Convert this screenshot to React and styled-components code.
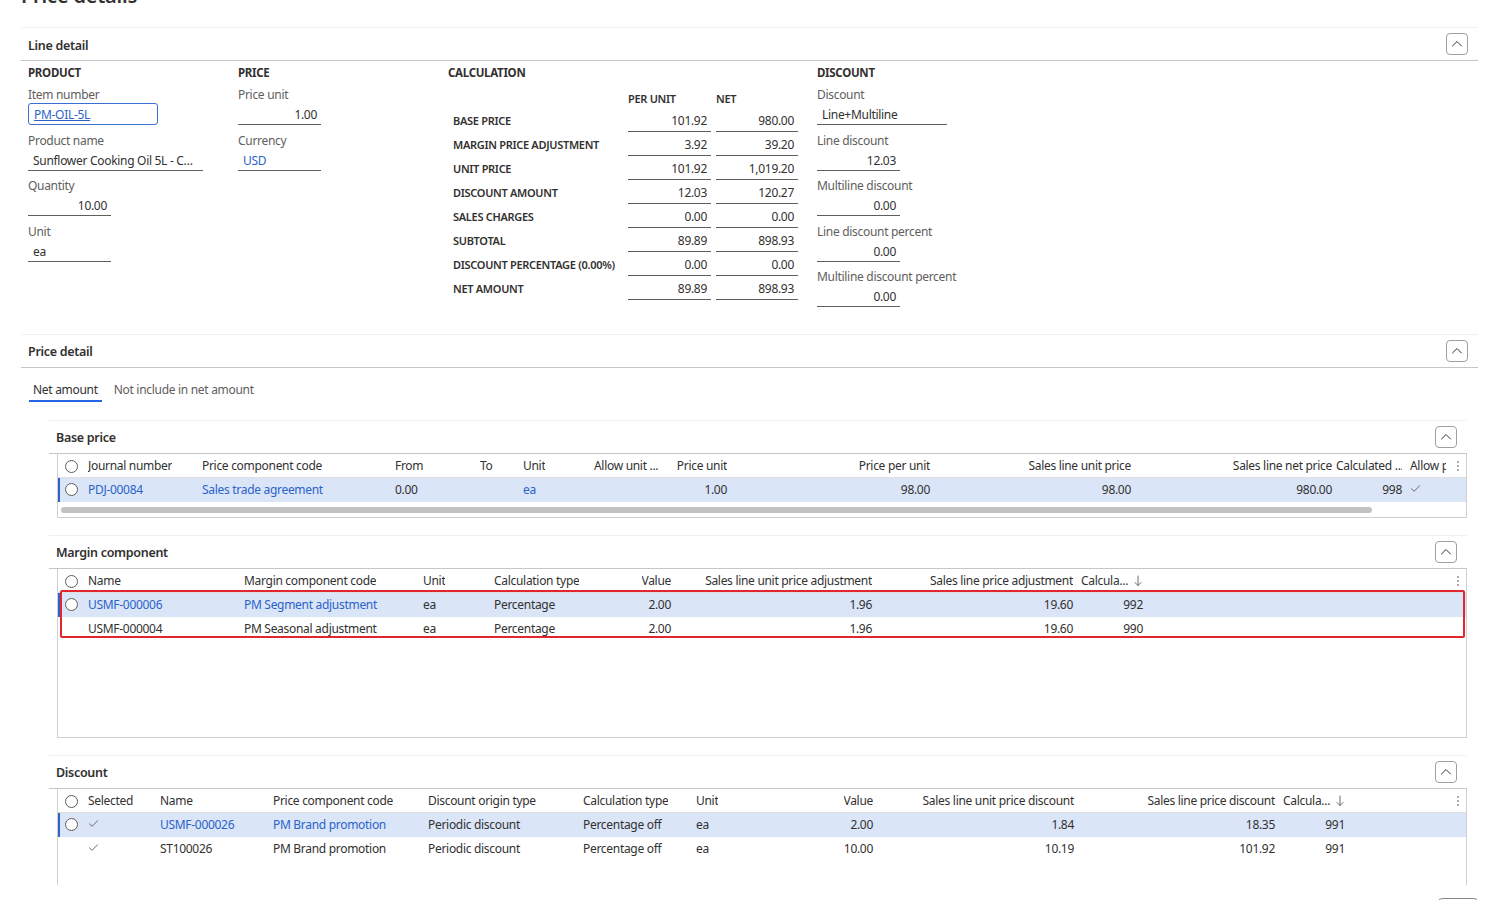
import React from 'react'
import styled, { createGlobalStyle, css } from 'styled-components'

const GlobalStyle = createGlobalStyle`
  html, body {
    margin: 0;
    padding: 0;
    background: #ffffff;
  }
  body {
    font-family: "Segoe UI", "Noto Sans", "Open Sans", sans-serif;
    font-size: 12px;
    letter-spacing: -0.3px;
    color: #323130;
    overflow: hidden;
  }
`

const LINK = '#2b63c9'

const Page = styled.div`
  margin-top: -18px;
  padding: 0 17px 0 21px;
`

const PageTitle = styled.h1`
  margin: 0;
  height: 28px;
  line-height: 28px;
  font-size: 20px;
  font-weight: 600;
  letter-spacing: -0.2px;
`

const Section = styled.section`
  margin-top: ${(p) => p.$top || 0}px;
  border-top: 1px solid #f1f0ef;
`

const SectionHeader = styled.div`
  height: 32px;
  display: flex;
  align-items: center;
  justify-content: space-between;
  padding: 0 10px 0 7px;
  border-bottom: 1px solid #c8c6c4;
`

const SectionTitle = styled.h2`
  margin: 0;
  padding-top: 2px;
  font-size: 12.5px;
  font-weight: 600;
`

const CollapseButton = styled.button`
  width: 22px;
  height: 22px;
  padding: 0;
  display: flex;
  align-items: center;
  justify-content: center;
  border: 1px solid #a19f9d;
  border-radius: 4px;
  background: #fff;
  color: #323130;
`

const LineBody = styled.div`
  display: flex;
  padding: 2px 0 20px 7px;
`

const Column = styled.div`
  width: ${(p) => p.$width}px;
  flex: none;
`

const GroupHeading = styled.div`
  line-height: 20px;
  margin-bottom: 3px;
  font-size: 11.5px;
  font-weight: 700;
  text-transform: uppercase;
`

const FieldLabel = styled.div`
  line-height: 17px;
  color: #605e5c;
  white-space: nowrap;
`

const FieldValue = styled.div`
  width: ${(p) => p.$width}px;
  height: 22px;
  box-sizing: border-box;
  padding: 2px 5px 0;
  line-height: 19px;
  margin-bottom: 6.5px;
  text-align: ${(p) => (p.$numeric ? 'right' : 'left')};
  border-bottom: 1px solid #605e5c;
  white-space: nowrap;
  overflow: hidden;
  text-overflow: ellipsis;
  color: ${(p) => (p.$link ? LINK : '#323130')};
  ${(p) => p.$numeric && css`padding-right: 4px;`}
  ${(p) =>
    p.$boxed &&
    css`
      border: 1px solid #3b6fd4;
      border-radius: 3px;
      padding-top: 1px;
      text-decoration: underline;
    `}
`

const CalcGrid = styled.div`
  display: grid;
  grid-template-columns: 175px 83px 82px;
  column-gap: 5px;
`

const CalcHead = styled.div`
  height: 22px;
  padding-top: 4px;
  box-sizing: border-box;
  line-height: 18px;
  font-size: 11px;
  font-weight: 600;
`

const CalcLabel = styled.div`
  height: 24px;
  padding: 4px 0 0 5px;
  box-sizing: border-box;
  line-height: 18px;
  font-size: 11px;
  font-weight: 600;
  white-space: nowrap;
`

const CalcValue = styled.div`
  height: 24px;
  padding: 4px 4px 0 0;
  box-sizing: border-box;
  line-height: 18px;
  text-align: right;
  border-bottom: 1px solid #605e5c;
`

const Tabs = styled.div`
  display: flex;
  gap: 8px;
  margin: 13px 0 0 8px;
`

const Tab = styled.div`
  padding: 0 4px 1px;
  line-height: 18px;
  border-bottom: 2px solid ${(p) => (p.$active ? '#2266e3' : 'transparent')};
  color: ${(p) => (p.$active ? '#323130' : '#605e5c')};
`

const SubSection = styled.div`
  margin: ${(p) => p.$top}px 11px 0 28px;
  border-top: 1px solid #f1f0ef;
`

const Grid = styled.div`
  margin-left: 8px;
  min-height: ${(p) => p.$minHeight}px;
  box-sizing: border-box;
  border-left: 1px solid #d2d0ce;
  border-right: 1px solid #d2d0ce;
  border-bottom: ${(p) => (p.$open ? 'none' : '1px solid #d2d0ce')};
`

const Row = styled.div`
  display: grid;
  grid-template-columns: ${(p) => p.$cols};
  height: 24px;
  align-items: center;
  box-sizing: border-box;
  ${(p) => p.$head && css`
    border-bottom: 1px solid #e1dfdd;
    padding-top: 2px;
  `}
  ${(p) =>
    p.$selected &&
    css`
      background: #dae5f8;
      box-shadow: inset 2px 0 0 #2b63c9;
    `}
`

const Cell = styled.div`
  padding: 0 4px;
  white-space: nowrap;
  overflow: hidden;
  text-overflow: ellipsis;
  text-align: ${(p) => (p.$right ? 'right' : 'left')};
  color: ${(p) => (p.$link ? LINK : '#323130')};
  line-height: 18px;
`

const HeadCell = styled(Cell)`
  display: flex;
  align-items: center;
  gap: 6px;
  justify-content: ${(p) => (p.$right ? 'flex-end' : 'flex-start')};
  padding-left: ${(p) => (p.$right ? 0 : 4)}px;
  span {
    overflow: hidden;
    text-overflow: ${(p) => (p.$clip ? 'clip' : 'ellipsis')};
  }
`

const RadioCell = styled.div`
  display: flex;
  justify-content: center;
`

const Radio = styled.span`
  width: 11px;
  height: 11px;
  border: 1px solid #605e5c;
  border-radius: 50%;
  background: #fff;
`

const Highlight = styled.div`
  position: relative;
  &::after {
    content: '';
    position: absolute;
    left: 2px;
    right: 1px;
    top: -3px;
    bottom: 3px;
    border: 2px solid #e0262f;
    border-radius: 2px;
    pointer-events: none;
  }
`

const ScrollTrack = styled.div`
  height: 15px;
  padding: 5px 94px 0 3px;
  box-sizing: border-box;
`

const ScrollThumb = styled.div`
  height: 6px;
  border-radius: 3px;
  background: #c2c2c2;
`

const Footer = styled.div`
  display: flex;
  justify-content: flex-end;
  margin-top: 13px;
`

const FooterButton = styled.button`
  width: 40px;
  height: 28px;
  border: 1px solid #8a8886;
  border-radius: 4px;
  background: #fff;
`

const ChevronUp = () => (
  <svg width="12" height="12" viewBox="0 0 12 12" fill="none">
    <path d="M1.5 8 L6 3.5 L10.5 8" stroke="#323130" strokeWidth="1" strokeLinecap="round" strokeLinejoin="round" />
  </svg>
)

const Check = () => (
  <svg width="11" height="11" viewBox="0 0 11 11" fill="none">
    <path d="M1.5 5.8 L4.2 8.3 L9.5 2.8" stroke="#605e5c" strokeWidth="0.9" strokeLinecap="round" strokeLinejoin="round" />
  </svg>
)

const SortDown = () => (
  <svg width="8" height="12" viewBox="0 0 8 12" fill="none">
    <path d="M4 1 V10.5 M1 7.5 L4 10.5 L7 7.5" stroke="#605e5c" strokeWidth="0.9" strokeLinecap="round" strokeLinejoin="round" />
  </svg>
)

const MoreDots = () => (
  <svg width="4" height="12" viewBox="0 0 4 12">
    <circle cx="2" cy="2" r="0.9" fill="#8a8886" />
    <circle cx="2" cy="6" r="0.9" fill="#8a8886" />
    <circle cx="2" cy="10" r="0.9" fill="#8a8886" />
  </svg>
)

const Field = ({ label, value, width = 83, numeric, link, boxed }) => (
  <div>
    <FieldLabel>{label}</FieldLabel>
    <FieldValue $width={width} $numeric={numeric} $link={link} $boxed={boxed}>
      {value}
    </FieldValue>
  </div>
)

const calcRows = [
  ['BASE PRICE', '101.92', '980.00'],
  ['MARGIN PRICE ADJUSTMENT', '3.92', '39.20'],
  ['UNIT PRICE', '101.92', '1,019.20'],
  ['DISCOUNT AMOUNT', '12.03', '120.27'],
  ['SALES CHARGES', '0.00', '0.00'],
  ['SUBTOTAL', '89.89', '898.93'],
  ['DISCOUNT PERCENTAGE (0.00%)', '0.00', '0.00'],
  ['NET AMOUNT', '89.89', '898.93'],
]

const Header = ({ title }) => (
  <SectionHeader>
    <SectionTitle>{title}</SectionTitle>
    <CollapseButton aria-label="Collapse">
      <ChevronUp />
    </CollapseButton>
  </SectionHeader>
)

// grid column widths, matched to the grid headers below
const baseCols = '26px 114px 193px 85px 43px 71px 84px 57px 203px 201px 201px 70px 44px 1fr'
const marginCols = '26px 156px 179px 71px 100px 85px 201px 201px 70px 1fr 16px'
const discountCols = '26px 72px 113px 155px 155px 113px 85px 100px 201px 201px 70px 1fr 16px'

const GridHeader = ({ cols, columns }) => (
  <Row $head $cols={cols}>
    <RadioCell>
      <Radio />
    </RadioCell>
    {columns.map((c, i) =>
      c.dots ? (
        <RadioCell key={i}>
          <MoreDots />
        </RadioCell>
      ) : (
        <HeadCell key={i} $right={c.right} $clip={c.clip}>
          <span>{c.title}</span>
          {c.sort && <SortDown />}
        </HeadCell>
      )
    )}
  </Row>
)

const GridRow = ({ cols, cells, selected }) => (
  <Row $cols={cols} $selected={selected}>
    <RadioCell>{selected && <Radio />}</RadioCell>
    {cells.map((c, i) => (
      <Cell key={i} $right={c.right} $link={selected && c.link}>
        {c.check ? <Check /> : c.text}
      </Cell>
    ))}
  </Row>
)

const baseHead = [
  { title: 'Journal number' },
  { title: 'Price component code' },
  { title: 'From' },
  { title: 'To' },
  { title: 'Unit' },
  { title: 'Allow unit ...' },
  { title: 'Price unit', right: true },
  { title: 'Price per unit', right: true },
  { title: 'Sales line unit price', right: true },
  { title: 'Sales line net price', right: true },
  { title: 'Calculated ...', right: true, clip: true },
  { title: 'Allow price adjustment', clip: true },
  { dots: true },
]

const baseRow = [
  { text: 'PDJ-00084', link: true },
  { text: 'Sales trade agreement', link: true },
  { text: '0.00' },
  { text: '' },
  { text: 'ea', link: true },
  { text: '' },
  { text: '1.00', right: true },
  { text: '98.00', right: true },
  { text: '98.00', right: true },
  { text: '980.00', right: true },
  { text: '998', right: true },
  { check: true },
]

const marginHead = [
  { title: 'Name' },
  { title: 'Margin component code' },
  { title: 'Unit' },
  { title: 'Calculation type' },
  { title: 'Value', right: true },
  { title: 'Sales line unit price adjustment', right: true },
  { title: 'Sales line price adjustment', right: true },
  { title: 'Calcula...', sort: true },
  { title: '' },
  { dots: true },
]

const marginRows = [
  ['USMF-000006', 'PM Segment adjustment', '992'],
  ['USMF-000004', 'PM Seasonal adjustment', '990'],
].map(([name, code, calc]) => [
  { text: name, link: true },
  { text: code, link: true },
  { text: 'ea' },
  { text: 'Percentage' },
  { text: '2.00', right: true },
  { text: '1.96', right: true },
  { text: '19.60', right: true },
  { text: calc, right: true },
])

const discountHead = [
  { title: 'Selected' },
  { title: 'Name' },
  { title: 'Price component code' },
  { title: 'Discount origin type' },
  { title: 'Calculation type' },
  { title: 'Unit' },
  { title: 'Value', right: true },
  { title: 'Sales line unit price discount', right: true },
  { title: 'Sales line price discount', right: true },
  { title: 'Calcula...', sort: true },
  { title: '' },
  { dots: true },
]

const discountRows = [
  ['USMF-000026', '2.00', '1.84', '18.35'],
  ['ST100026', '10.00', '10.19', '101.92'],
].map(([name, value, unitDisc, disc]) => [
  { check: true },
  { text: name, link: true },
  { text: 'PM Brand promotion', link: true },
  { text: 'Periodic discount' },
  { text: 'Percentage off' },
  { text: 'ea' },
  { text: value, right: true },
  { text: unitDisc, right: true },
  { text: disc, right: true },
  { text: '991', right: true },
])

export default function App() {
  return (
    <>
      <GlobalStyle />
      <Page>
        <PageTitle>Price details</PageTitle>

        <Section $top={17}>
          <Header title="Line detail" />
          <LineBody>
            <Column $width={210}>
              <GroupHeading>Product</GroupHeading>
              <Field label="Item number" value="PM-OIL-5L" width={130} link boxed />
              <Field label="Product name" value="Sunflower Cooking Oil 5L - Case of 12" width={175} />
              <Field label="Quantity" value="10.00" numeric />
              <Field label="Unit" value="ea" />
            </Column>
            <Column $width={210}>
              <GroupHeading>Price</GroupHeading>
              <Field label="Price unit" value="1.00" numeric />
              <Field label="Currency" value="USD" link />
            </Column>
            <Column $width={369}>
              <GroupHeading>Calculation</GroupHeading>
              <CalcGrid>
                <CalcHead />
                <CalcHead>PER UNIT</CalcHead>
                <CalcHead>NET</CalcHead>
                {calcRows.map(([label, unit, net]) => (
                  <React.Fragment key={label}>
                    <CalcLabel>{label}</CalcLabel>
                    <CalcValue>{unit}</CalcValue>
                    <CalcValue>{net}</CalcValue>
                  </React.Fragment>
                ))}
              </CalcGrid>
            </Column>
            <Column $width={300}>
              <GroupHeading>Discount</GroupHeading>
              <Field label="Discount" value="Line+Multiline" width={130} />
              <Field label="Line discount" value="12.03" numeric />
              <Field label="Multiline discount" value="0.00" numeric />
              <Field label="Line discount percent" value="0.00" numeric />
              <Field label="Multiline discount percent" value="0.00" numeric />
            </Column>
          </LineBody>
        </Section>

        <Section>
          <Header title="Price detail" />
          <Tabs>
            <Tab $active>Net amount</Tab>
            <Tab>Not include in net amount</Tab>
          </Tabs>

          <SubSection $top={18}>
            <Header title="Base price" />
            <Grid>
              <GridHeader cols={baseCols} columns={baseHead} />
              <GridRow cols={baseCols} cells={baseRow} selected />
              <ScrollTrack>
                <ScrollThumb />
              </ScrollTrack>
            </Grid>
          </SubSection>

          <SubSection $top={17}>
            <Header title="Margin component" />
            <Grid $minHeight={169}>
              <GridHeader cols={marginCols} columns={marginHead} />
              <Highlight>
                {marginRows.map((cells, i) => (
                  <GridRow key={i} cols={marginCols} cells={cells} selected={i === 0} />
                ))}
              </Highlight>
            </Grid>
          </SubSection>

          <SubSection $top={17}>
            <Header title="Discount" />
            <Grid $minHeight={96} $open>
              <GridHeader cols={discountCols} columns={discountHead} />
              {discountRows.map((cells, i) => (
                <GridRow key={i} cols={discountCols} cells={cells} selected={i === 0} />
              ))}
            </Grid>
          </SubSection>
        </Section>

        <Footer>
          <FooterButton aria-label="OK" />
        </Footer>
      </Page>
    </>
  )
}
